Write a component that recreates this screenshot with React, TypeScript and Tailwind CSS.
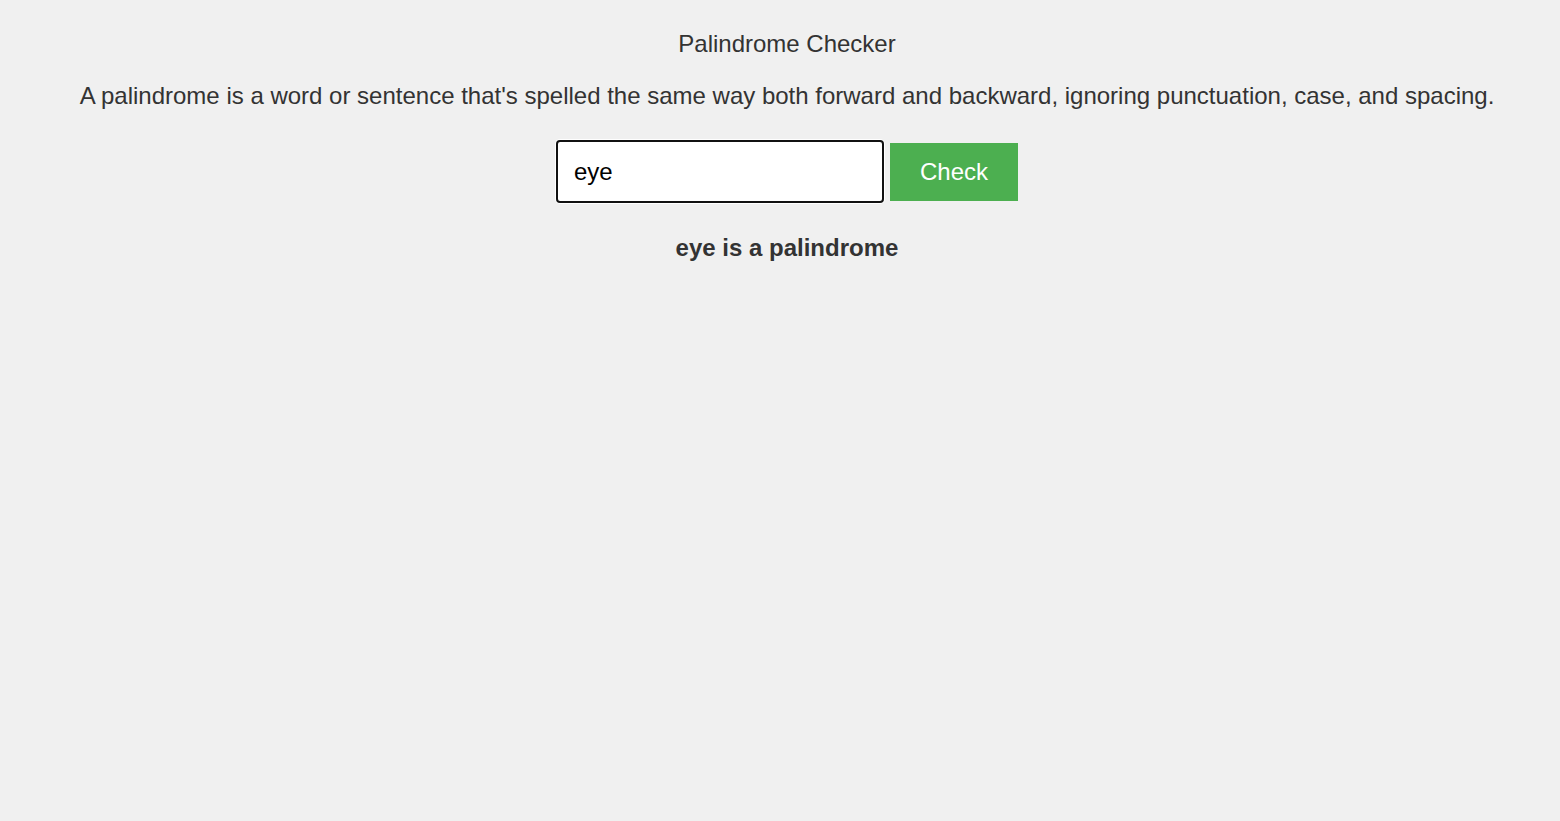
import React, { useState } from "react";

const App = () => {
  const [text, setText] = useState("eye");
  const [result, setResult] = useState("eye is a palindrome");

  const check = () => {
    const clean = text.toLowerCase().replace(/[^a-z0-9]/g, "");
    const ok = clean.length > 0 && clean === clean.split("").reverse().join("");
    setResult(`${text} is ${ok ? "a" : "not a"} palindrome`);
  };

  return (
    <div className="min-h-screen bg-[#f0f0f0] text-[#333] font-['Liberation_Sans',Arial,sans-serif] text-[24px] pl-[14px] pt-[30px]">
      <div className="flex flex-col items-center text-center">
        <h1 className="leading-[28px] font-normal">Palindrome Checker</h1>
        <p className="mt-[24px] leading-[28px]">
          A palindrome is a word or sentence that's spelled the same way both forward and backward, ignoring
          punctuation, case, and spacing.
        </p>
        <div className="mt-[30px] flex items-center gap-[6px]">
          <input
            value={text}
            onChange={(e) => setText(e.target.value)}
            className="w-[328px] h-[63px] bg-white border-2 border-[#111] rounded-[4px] pl-[16px] text-black text-[24px] outline-none shadow-[0_0_0_1px_#ffffff]"
          />
          <button
            onClick={check}
            className="w-[128px] h-[58px] bg-[#4caf50] text-white text-[24px] leading-[28px]"
          >
            Check
          </button>
        </div>
        <div className="mt-[31px] font-bold leading-[28px]">{result}</div>
      </div>
    </div>
  );
};

export default App;
